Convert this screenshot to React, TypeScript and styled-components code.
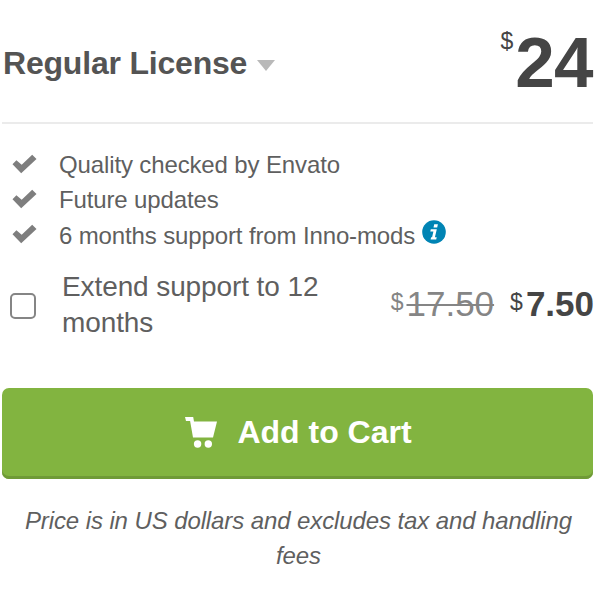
import React from "react";
import styled, { createGlobalStyle } from "styled-components";

const Global = createGlobalStyle`
  * { box-sizing: border-box; }
  body {
    margin: 0;
    background: #fff;
    color: #5f5f5f;
    font-family: "Liberation Sans", Arial, sans-serif;
  }
`;

const Panel = styled.main`
  width: 600px;
  height: 600px;
  padding: 0 7px 0 2px;
  display: flex;
  flex-direction: column;
  overflow: hidden;
`;

const Header = styled.header`
  height: 124px;
  padding-top: 27px;
  display: flex;
  justify-content: space-between;
  align-items: flex-start;
  border-bottom: 2px solid #ebebeb;
`;

const LicenseSelect = styled.div`
  height: 72px;
  display: flex;
  align-items: center;
  color: #545454;
`;

const LicenseName = styled.h1`
  margin: 0 0 0 1px;
  font-size: 32px;
  line-height: 36px;
  letter-spacing: -0.2px;
`;

const Caret = styled.svg`
  width: 18px;
  height: 11px;
  margin: 5px 0 0 10px;
  fill: #b9b9b9;
`;

const Price = styled.div`
  display: flex;
  align-items: flex-start;
  color: #454545;
`;

const PriceSign = styled.span`
  margin: 1px 2px 0 0;
  font-size: 23px;
  line-height: 26px;
`;

const PriceValue = styled.strong`
  font-size: 71px;
  line-height: 71px;
  letter-spacing: -0.6px;
`;

const Features = styled.ul`
  list-style: none;
  margin: 23px 0 0;
  padding: 0;
`;

const Feature = styled.li<{ $height: number }>`
  height: ${(p) => p.$height}px;
  display: flex;
  align-items: center;
  font-size: 24px;
  letter-spacing: -0.13px;
  line-height: 35px;
`;

const Check = styled.svg`
  width: 26px;
  height: 20px;
  margin: -2px 22px 0 9px;
  fill: #7e7e7e;
`;

const InfoIcon = styled.svg`
  width: 24px;
  height: 24px;
  margin: -7px 0 0 7px;
`;

const Extension = styled.div`
  height: 72px;
  margin-top: 16px;
  display: flex;
  align-items: center;
`;

const Checkbox = styled.input`
  appearance: none;
  width: 26px;
  height: 26px;
  margin: 2px 0 0 8px;
  border: 2px solid #858585;
  border-radius: 5px;
  background: #fff;
`;

const ExtensionLabel = styled.label`
  width: 280px;
  margin-left: 26px;
  font-size: 28px;
  line-height: 36px;
  letter-spacing: -0.1px;
`;

const ExtensionPrices = styled.div`
  margin: -2px -1px 0 auto;
  display: flex;
  gap: 16px;
`;

const Amount = styled.span<{ $old?: boolean }>`
  display: flex;
  color: ${(p) => (p.$old ? "#858585" : "#454545")};
  font-size: 35px;
  line-height: 38px;
  font-weight: ${(p) => (p.$old ? 400 : 700)};

  small {
    font-size: 23px;
    line-height: 34px;
    font-weight: 400;
    margin-right: 3px;
  }
`;

const Struck = styled.s`
  text-decoration-thickness: 2px;
`;

const CartButton = styled.button`
  height: 91px;
  flex: none;
  margin-top: 47px;
  padding: 0 0 3px 1px;
  border: 0;
  border-radius: 7px;
  background: #82b440;
  box-shadow: inset 0 -3px 0 #6f9a37;
  color: #fff;
  font: bold 32px/40px "Liberation Sans", Arial, sans-serif;
  display: flex;
  justify-content: center;
  align-items: center;
  gap: 20px;
`;

const CartIcon = styled.svg`
  width: 33px;
  height: 31px;
  fill: #fff;
`;

const Note = styled.p`
  margin: 24px 0 0 2px;
  text-align: center;
  font-size: 24px;
  line-height: 35px;
  letter-spacing: -0.1px;
  font-style: italic;
`;

const CheckMark = () => (
  <Check viewBox="0 0 26 20">
    <path d="M1.5 10.3 5.4 6.3 10.7 10.8 21.2.8 25.5 5 10.2 19.2Z" />
  </Check>
);

export default function App() {
  return (
    <>
      <Global />
      <Panel>
        <Header>
          <LicenseSelect>
            <LicenseName>Regular License</LicenseName>
            <Caret viewBox="0 0 18 11">
              <path d="M0 0h18L9 11Z" />
            </Caret>
          </LicenseSelect>
          <Price>
            <PriceSign>$</PriceSign>
            <PriceValue>24</PriceValue>
          </Price>
        </Header>

        <Features>
          <Feature $height={35}>
            <CheckMark />
            Quality checked by Envato
          </Feature>
          <Feature $height={35}>
            <CheckMark />
            Future updates
          </Feature>
          <Feature $height={36}>
            <CheckMark />
            6 months support from Inno-mods
            <InfoIcon viewBox="0 0 24 24">
              <circle cx="12" cy="12" r="11.8" fill="#0084b4" />
              <path
                d="M12.2 4.3h3.7l-.7 3.3h-3.7ZM8.8 9.3h6l-1.9 7.9h1.8l-.5 2.2H8.6l.5-2.2h1l1.3-5.7H8.3Z"
                fill="#fff"
              />
            </InfoIcon>
          </Feature>
        </Features>

        <Extension>
          <Checkbox type="checkbox" id="extend" />
          <ExtensionLabel htmlFor="extend">Extend support to 12 months</ExtensionLabel>
          <ExtensionPrices>
            <Amount $old>
              <small>$</small>
              <Struck>17.50</Struck>
            </Amount>
            <Amount>
              <small>$</small>7.50
            </Amount>
          </ExtensionPrices>
        </Extension>

        <CartButton>
          <CartIcon viewBox="0 0 33 31">
            <path d="M1 0h8.2l.8 4.6H33L29 20.6H9L6.1 4H2Z" />
            <circle cx="13.6" cy="27" r="3.7" />
            <circle cx="24.3" cy="27" r="3.7" />
          </CartIcon>
          Add to Cart
        </CartButton>

        <Note>Price is in US dollars and excludes tax and handling fees</Note>
      </Panel>
    </>
  );
}
